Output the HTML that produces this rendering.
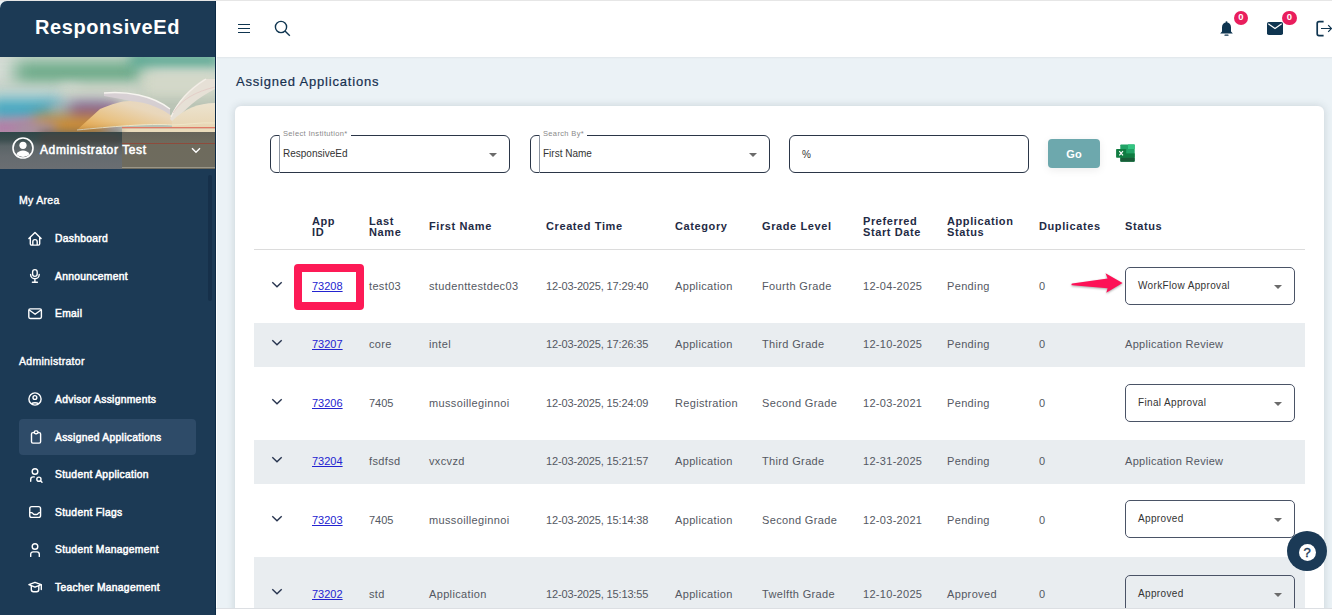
<!DOCTYPE html>
<html><head><meta charset="utf-8"><style>
*{box-sizing:border-box;margin:0;padding:0}
html,body{width:1332px;height:615px;overflow:hidden;background:#ebf2f6;font-family:"Liberation Sans",sans-serif;position:relative}
div,span,svg{position:absolute}
.t{white-space:nowrap}
#top{left:0;top:0;width:1332px;height:1px;background:#e6e6e6}
#side{left:0;top:1px;width:216px;height:614px;background:#1c3a55;border-top-left-radius:7px;overflow:hidden}
#sedge{left:215px;top:1px;width:1px;height:614px;background:#0c2a45}
#swhite{left:216px;top:57px;width:1px;height:558px;background:#fff}
#logo{left:0;top:0;width:215px;height:56px;color:#fff;font-weight:bold;font-size:20px;letter-spacing:0.6px;text-align:center;line-height:52px}
#img{left:0;top:56px;width:215px;height:112px;overflow:hidden;background:#b9c3b5}
#hdr{left:216px;top:1px;width:1116px;height:56px;background:#fff}
.mi{left:0;width:215px;height:36px;color:#fff;font-weight:normal;font-size:10.3px;letter-spacing:0.3px;-webkit-text-stroke:0.5px #fff}
.mi span{left:55px;top:0;line-height:36px}
.mi svg{left:27px;top:11px}
.sec{left:19px;color:#fff;font-weight:normal;font-size:10.5px;letter-spacing:0.3px;-webkit-text-stroke:0.4px #fff}
#card{left:235px;top:106px;width:1089px;height:520px;background:#fff;border-radius:6px;box-shadow:0 0 9px rgba(40,60,80,0.18)}
.fld{top:135px;height:38px;border:1px solid #2b3648;border-radius:6px;background:#fff}
.lbl{font-size:7.5px;letter-spacing:0.35px;color:#8a8a8a;background:#fff;padding:0 3px 0 3px;top:-7px;line-height:10px}
.val{left:12px;top:0;line-height:36px;font-size:10px;color:#333}
.tri{width:0;height:0;border-left:4px solid transparent;border-right:4px solid transparent;border-top:4px solid #6b6b6b}
.th{font-weight:bold;font-size:11px;color:#1f2b45;line-height:11px;letter-spacing:0.6px}
.row{left:254px;width:1051px}
.g{background:#e9edf0}
.td{font-size:11px;color:#545862;white-space:nowrap;line-height:12px}
.lnk{color:#2323d0;text-decoration:underline}
.sel{left:1125px;width:170px;height:38px;border:1px solid #4a5366;border-radius:5px;background:transparent}
.sel span{left:12px;top:0;line-height:36px;font-size:10px;color:#333;letter-spacing:0.35px}
.sel .tri{left:148px;top:17px}
</style></head><body>
<div id="top"></div>
<div id="side">
<div id="logo" class="t">ResponsiveEd</div>
<div id="img"><div style="left:-20px;top:-10px;width:260px;height:40px;background:#d6ddd6;filter:blur(8px)"></div><div style="left:15px;top:6px;width:130px;height:18px;background:#4d9c72;filter:blur(9px)"></div><div style="left:130px;top:-4px;width:90px;height:16px;background:#5aa892;filter:blur(6px)"></div><div style="left:140px;top:14px;width:80px;height:26px;background:#d3d8c8;filter:blur(7px)"></div><div style="left:-10px;top:30px;width:90px;height:20px;background:#c9d9d3;filter:blur(6px)"></div><div style="left:60px;top:28px;width:80px;height:22px;background:#cfd6c9;filter:blur(6px)"></div><div style="left:-10px;top:42px;width:70px;height:22px;background:#45a9c4;filter:blur(7px)"></div><div style="left:50px;top:45px;width:60px;height:20px;background:#98b4be;filter:blur(7px)"></div><div style="left:70px;top:46px;width:50px;height:22px;background:#8c5c8c;filter:blur(7px)"></div><div style="left:-10px;top:62px;width:50px;height:18px;background:#b27ba6;filter:blur(6px)"></div><div style="left:35px;top:58px;width:70px;height:22px;background:#c98a33;filter:blur(7px)"></div><div style="left:15px;top:65px;width:40px;height:15px;background:#a58fa0;filter:blur(6px)"></div><svg style="left:0;top:0" width="215" height="112" viewBox="0 0 215 112">
<defs><linearGradient id="pg" x1="0" y1="1" x2="1" y2="0"><stop offset="0" stop-color="#e4a040"/><stop offset="0.35" stop-color="#e8c284"/><stop offset="0.7" stop-color="#e9d7bb"/><stop offset="1" stop-color="#e5d9c8"/></linearGradient>
<linearGradient id="pg2" x1="0" y1="0" x2="0" y2="1"><stop offset="0" stop-color="#ece3cf"/><stop offset="1" stop-color="#e8d6b4"/></linearGradient></defs>
<path d="M104 36 C126 34 152 38 170 52 L170 58 C150 47 126 43 104 39 Z" fill="#d9d0d6" opacity="0.85"/>
<path d="M104 36 C126 34 152 38 170 52" stroke="#f7f5f0" stroke-width="1.4" fill="none"/>
<path d="M77 73 L100 52 C112 47 121 44 130 44 C148 45 162 52 172 59 L172 68 C150 67 115 69 77 73 Z" fill="url(#pg)"/>
<path d="M170 62 C176 46 188 32 204 22 L215 22 L215 32 C199 40 184 52 174 66 Z" fill="#e6e0d6"/>
<path d="M171 60 C178 44 190 32 206 22" stroke="#f3efe8" stroke-width="1.3" fill="none"/>
<path d="M173 56 C182 42 195 35 215 30" stroke="#e2c9c4" stroke-width="0.8" fill="none"/>
<path d="M172 64 C184 52 198 46 215 46 L215 70 L172 70 Z" fill="url(#pg2)"/>
<path d="M77 73 C110 70 150 66 172 68 C185 68 200 65 215 66" stroke="#efe6c8" stroke-width="1" fill="none"/>
<rect x="122" y="70" width="93" height="1.6" fill="#e07a66"/>
<rect x="122" y="71.5" width="93" height="3.5" fill="#eadcbc"/>
</svg><div style="left:0;top:75px;width:122px;height:37px;background:linear-gradient(180deg,#2f4748 0%,#3a4d4e 20%,#5a6467 38%,#656b6f 65%,#6a6e72 100%)"></div><div style="left:40px;top:75px;width:82px;height:14px;background:#4a4440;filter:blur(4px);opacity:0.7"></div><div style="left:122px;top:75px;width:93px;height:37px;background:linear-gradient(180deg,#66645a 0%,#6e6b5d 30%,#6e6b5e 100%)"></div><div style="left:122px;top:85.5px;width:93px;height:1.2px;background:#8e4b3c"></div><div style="left:122px;top:110px;width:93px;height:1px;background:#9a9688"></div></div>
</div>
<svg style="left:12px;top:137px" width="22" height="22" viewBox="0 0 22 22"><circle cx="11" cy="11" r="10" fill="none" stroke="#fff" stroke-width="1.6"/><circle cx="11" cy="8.3" r="3.6" fill="#fff"/><path d="M4.4 17.2C5.8 14.6 8.2 13.4 11 13.4S16.2 14.6 17.6 17.2A9.3 9.3 0 0 1 4.4 17.2Z" fill="#fff"/></svg>
<div class="t" style="left:40px;top:143px;color:#fff;font-size:12px;line-height:14px;letter-spacing:0.6px;-webkit-text-stroke:0.55px #fff">Administrator Test</div>
<svg style="left:191px;top:147px" width="10" height="7" viewBox="0 0 10 7"><path d="M1 1.2L5 5.2L9 1.2" stroke="#fff" stroke-width="1.4" fill="none"/></svg>
<div id="sedge"></div><div id="swhite"></div>
<div class="sec t" style="top:194px">My Area</div>
<div class="sec t" style="top:354.5px">Administrator</div>
<div style="left:19px;top:419px;width:177px;height:36px;background:#2e4b68;border-radius:4px"></div>
<div class="mi" style="top:221px"><span class="t">Dashboard</span></div>
<div class="mi" style="top:259px"><span class="t">Announcement</span></div>
<div class="mi" style="top:296px"><span class="t">Email</span></div>
<div class="mi" style="top:382px"><span class="t">Advisor Assignments</span></div>
<div class="mi" style="top:420px"><span class="t">Assigned Applications</span></div>
<div class="mi" style="top:457px"><span class="t">Student Application</span></div>
<div class="mi" style="top:495px"><span class="t">Student Flags</span></div>
<div class="mi" style="top:532px"><span class="t">Student Management</span></div>
<div class="mi" style="top:570px"><span class="t">Teacher Management</span></div>
<svg style="left:0;top:0" width="216" height="615" viewBox="0 0 216 615" fill="none" stroke="#fff" stroke-width="1.4" stroke-linecap="round" stroke-linejoin="round">
<path d="M28.9 238.6L35 232.6L41.1 238.6M30.3 237.3V243.8a1.3 1.3 0 0 0 1.3 1.3H38.4a1.3 1.3 0 0 0 1.3-1.3V237.3M32.8 245V241.8a2.2 2.2 0 0 1 4.4 0V245"/>
<rect x="32.6" y="269.6" width="4.6" height="6.8" rx="2.3"/>
<path d="M30.6 274.4a4.3 4.3 0 0 0 8.6 0M34.9 278.8V281.5M32.4 282.2H37.4" />
<rect x="28.8" y="308.9" width="12.6" height="9.6" rx="1.4"/>
<path d="M29.6 310.2L35.1 314.2L40.6 310.2"/>
<circle cx="35" cy="399" r="6.1"/>
<circle cx="34.9" cy="397.5" r="1.9"/>
<path d="M31.6 403.6a4 1.9 0 0 1 6.8 0"/>
<rect x="31.5" y="432.6" width="9.1" height="10.5" rx="1.4"/>
<rect x="34.2" y="430.9" width="3.8" height="2.8" rx="1.4" fill="#2e4b68"/>
<circle cx="35" cy="471.5" r="2.8"/>
<path d="M30.7 481.2V479.4a2.5 2.5 0 0 1 2.5-2.5H34.3"/>
<circle cx="38.9" cy="479.2" r="2.1"/>
<path d="M40.5 480.8L42 482.3"/>
<rect x="29.75" y="506.6" width="10.8" height="10.8" rx="2"/>
<path d="M29.9 512.6H31.4c.8 0 1.2.5 1.6 1 .4.6 1 .9 1.7.9h1.6c.7 0 1.3-.3 1.7-.9.4-.5.8-1 1.6-1H40.4"/>
<circle cx="35" cy="546.5" r="2.8"/>
<path d="M30.7 556.4V554.3a2.4 2.4 0 0 1 2.4-2.4H36.9a2.4 2.4 0 0 1 2.4 2.4V556.4"/>
<path d="M28.9 584.7L35 582.3L41.2 584.7L35 587.2Z"/>
<path d="M31.3 586V589.5a2.2 2.2 0 0 0 2.2 2.2H36.6a2.2 2.2 0 0 0 2.2-2.2V586M41.3 585V589.6"/>
</svg>
<div style="left:208px;top:175px;width:4px;height:126px;background:#16304a;border-radius:2px"></div>
<div id="hdr"></div><div style="left:217px;top:57px;width:1115px;height:2px;background:linear-gradient(180deg,#e0e6ea,#ebf2f6)"></div>
<svg style="left:237px;top:22px" width="14" height="13" viewBox="0 0 14 13"><path d="M1 2.5H13M1 6.5H13M1 10.5H13" stroke="#0f3550" stroke-width="1.2"/></svg>
<svg style="left:273px;top:19px" width="19" height="19" viewBox="0 0 19 19" fill="none" stroke="#0f3550" stroke-width="1.4"><circle cx="8" cy="8" r="5.6"/><path d="M12 12L16.8 16.8"/></svg>
<svg style="left:1219px;top:20px" width="15" height="17" viewBox="0 0 15 17"><circle cx="7.5" cy="2.3" r="1" fill="#0f3550"/><path d="M7.5 2.4c2.6 0 4.5 2 4.5 4.8v4.4l1.8 1.9H1.2l1.8-1.9V7.2c0-2.8 1.9-4.8 4.5-4.8z" fill="#0f3550"/><path d="M6 15.2h3" stroke="#0f3550" stroke-width="1.2" stroke-linecap="round"/></svg>
<div style="left:1234px;top:11px;width:14px;height:14px;border-radius:7px;background:#e91e5d;color:#fff;font-size:9.5px;font-weight:bold;text-align:center;line-height:12px">0</div>
<svg style="left:1267px;top:22px" width="16" height="13" viewBox="0 0 16 13"><rect x="0" y="0" width="16" height="13" rx="1.8" fill="#0f3550"/><path d="M1.3 1.8L8 6.5L14.7 1.8" stroke="#fff" stroke-width="1.2" fill="none"/></svg>
<div style="left:1282px;top:11px;width:15px;height:14px;border-radius:7px;background:#e91e5d;color:#fff;font-size:9.5px;font-weight:bold;text-align:center;line-height:12px">0</div>
<svg style="left:1315px;top:20px" width="17" height="17" viewBox="0 0 17 17" fill="none" stroke="#0f3550"><path d="M8.6 1.6H4a1.8 1.8 0 0 0-1.8 1.8V13.8a1.8 1.8 0 0 0 1.8 1.8H8.6" stroke-width="1.7"/><path d="M6 8.5H16.5M13.2 5.2L16.5 8.5L13.2 11.8" stroke-width="1.2"/></svg>
<div class="t" style="left:236px;top:74px;font-size:13px;letter-spacing:0.8px;color:#16304f;-webkit-text-stroke:0.2px #16304f">Assigned Applications</div>
<div id="card"></div>
<div class="fld" style="left:270px;width:240px"><div style="left:8px;top:-1px;width:1px;height:38px;background:#8f97a3"></div><div class="lbl t" style="left:9px">Select Institution*</div><div class="val t" style="">ResponsiveEd</div><div class="tri" style="left:218px;top:17px"></div></div>
<div class="fld" style="left:530px;width:240px"><div style="left:8px;top:-1px;width:1px;height:38px;background:#8f97a3"></div><div class="lbl t" style="left:9px">Search By*</div><div class="val t" style="">First Name</div><div class="tri" style="left:218px;top:17px"></div></div>
<div class="fld" style="left:789px;width:240px"><div class="val t" style="font-size:10px;top:1px">%</div></div>
<div style="left:1048px;top:139px;width:52px;height:29px;background:#6da8ad;border-radius:4px;color:#fff;font-weight:bold;font-size:11px;text-align:center;line-height:31px;box-shadow:0 2px 8px rgba(0,0,0,0.08)">Go</div>
<svg style="left:1115px;top:144px" width="21" height="19" viewBox="0 0 21 19"><rect x="5.3" y="0.4" width="14.4" height="17.3" rx="0.8" fill="#21a366"/><rect x="13" y="0.4" width="6.7" height="4.6" fill="#33c481"/><rect x="5.3" y="9.4" width="14.4" height="4.2" fill="#107c41"/><rect x="5.3" y="13.6" width="14.4" height="4.1" rx="0.8" fill="#185c37"/><rect x="1.1" y="4.9" width="10.1" height="8.8" rx="0.7" fill="#107c41"/><path d="M4.3 7.2L8 11.4M8 7.2L4.3 11.4" stroke="#fff" stroke-width="1.2"/></svg>
<div class="th t" style="left:312px;top:216px">App<br>ID</div>
<div class="th t" style="left:369px;top:216px">Last<br>Name</div>
<div class="th t" style="left:429px;top:221px">First Name</div>
<div class="th t" style="left:546px;top:221px">Created Time</div>
<div class="th t" style="left:675px;top:221px">Category</div>
<div class="th t" style="left:762px;top:221px">Grade Level</div>
<div class="th t" style="left:863px;top:216px">Preferred<br>Start Date</div>
<div class="th t" style="left:947px;top:216px">Application<br>Status</div>
<div class="th t" style="left:1039px;top:221px">Duplicates</div>
<div class="th t" style="left:1125px;top:221px">Status</div>
<div style="left:254px;top:249px;width:1051px;height:1px;background:#dcdcdc"></div>
<svg style="left:271px;top:280.5px" width="12" height="7" viewBox="0 0 12 7"><path d="M1.3 1.2L6 5.8L10.7 1.2" stroke="#27344f" stroke-width="1.4" fill="none"/></svg>
<div class="td t" style="left:312px;top:279.5px;letter-spacing:0"><span style="position:static" class="lnk">73208</span></div>
<div class="td t" style="left:369px;top:279.5px;letter-spacing:0.35px">test03</div>
<div class="td t" style="left:429px;top:279.5px;letter-spacing:0.35px">studenttestdec03</div>
<div class="td t" style="left:546px;top:279.5px;letter-spacing:-0.15px">12-03-2025, 17:29:40</div>
<div class="td t" style="left:675px;top:279.5px;letter-spacing:0.35px">Application</div>
<div class="td t" style="left:762px;top:279.5px;letter-spacing:0.35px">Fourth Grade</div>
<div class="td t" style="left:863px;top:279.5px;letter-spacing:0.3px">12-04-2025</div>
<div class="td t" style="left:947px;top:279.5px;letter-spacing:0.35px">Pending</div>
<div class="td t" style="left:1039px;top:279.5px;letter-spacing:0">0</div>
<div class="sel" style="top:267px"><span class="t">WorkFlow Approval</span><div class="tri"></div></div>
<div class="row g" style="top:323px;height:44px"></div>
<svg style="left:271px;top:339.0px" width="12" height="7" viewBox="0 0 12 7"><path d="M1.3 1.2L6 5.8L10.7 1.2" stroke="#27344f" stroke-width="1.4" fill="none"/></svg>
<div class="td t" style="left:312px;top:338.0px;letter-spacing:0"><span style="position:static" class="lnk">73207</span></div>
<div class="td t" style="left:369px;top:338.0px;letter-spacing:0.35px">core</div>
<div class="td t" style="left:429px;top:338.0px;letter-spacing:0.35px">intel</div>
<div class="td t" style="left:546px;top:338.0px;letter-spacing:-0.15px">12-03-2025, 17:26:35</div>
<div class="td t" style="left:675px;top:338.0px;letter-spacing:0.35px">Application</div>
<div class="td t" style="left:762px;top:338.0px;letter-spacing:0.35px">Third Grade</div>
<div class="td t" style="left:863px;top:338.0px;letter-spacing:0.3px">12-10-2025</div>
<div class="td t" style="left:947px;top:338.0px;letter-spacing:0.35px">Pending</div>
<div class="td t" style="left:1039px;top:338.0px;letter-spacing:0">0</div>
<div class="td t" style="left:1125px;top:338.0px;letter-spacing:0.3px">Application Review</div>
<svg style="left:271px;top:397.5px" width="12" height="7" viewBox="0 0 12 7"><path d="M1.3 1.2L6 5.8L10.7 1.2" stroke="#27344f" stroke-width="1.4" fill="none"/></svg>
<div class="td t" style="left:312px;top:396.5px;letter-spacing:0"><span style="position:static" class="lnk">73206</span></div>
<div class="td t" style="left:369px;top:396.5px;letter-spacing:0">7405</div>
<div class="td t" style="left:429px;top:396.5px;letter-spacing:0.35px">mussoilleginnoi</div>
<div class="td t" style="left:546px;top:396.5px;letter-spacing:-0.15px">12-03-2025, 15:24:09</div>
<div class="td t" style="left:675px;top:396.5px;letter-spacing:0.35px">Registration</div>
<div class="td t" style="left:762px;top:396.5px;letter-spacing:0.35px">Second Grade</div>
<div class="td t" style="left:863px;top:396.5px;letter-spacing:0.3px">12-03-2021</div>
<div class="td t" style="left:947px;top:396.5px;letter-spacing:0.35px">Pending</div>
<div class="td t" style="left:1039px;top:396.5px;letter-spacing:0">0</div>
<div class="sel" style="top:384px"><span class="t">Final Approval</span><div class="tri"></div></div>
<div class="row g" style="top:440px;height:44px"></div>
<svg style="left:271px;top:456.0px" width="12" height="7" viewBox="0 0 12 7"><path d="M1.3 1.2L6 5.8L10.7 1.2" stroke="#27344f" stroke-width="1.4" fill="none"/></svg>
<div class="td t" style="left:312px;top:455.0px;letter-spacing:0"><span style="position:static" class="lnk">73204</span></div>
<div class="td t" style="left:369px;top:455.0px;letter-spacing:0.35px">fsdfsd</div>
<div class="td t" style="left:429px;top:455.0px;letter-spacing:0.35px">vxcvzd</div>
<div class="td t" style="left:546px;top:455.0px;letter-spacing:-0.15px">12-03-2025, 15:21:57</div>
<div class="td t" style="left:675px;top:455.0px;letter-spacing:0.35px">Application</div>
<div class="td t" style="left:762px;top:455.0px;letter-spacing:0.35px">Third Grade</div>
<div class="td t" style="left:863px;top:455.0px;letter-spacing:0.3px">12-31-2025</div>
<div class="td t" style="left:947px;top:455.0px;letter-spacing:0.35px">Pending</div>
<div class="td t" style="left:1039px;top:455.0px;letter-spacing:0">0</div>
<div class="td t" style="left:1125px;top:455.0px;letter-spacing:0.3px">Application Review</div>
<svg style="left:271px;top:514.5px" width="12" height="7" viewBox="0 0 12 7"><path d="M1.3 1.2L6 5.8L10.7 1.2" stroke="#27344f" stroke-width="1.4" fill="none"/></svg>
<div class="td t" style="left:312px;top:513.5px;letter-spacing:0"><span style="position:static" class="lnk">73203</span></div>
<div class="td t" style="left:369px;top:513.5px;letter-spacing:0">7405</div>
<div class="td t" style="left:429px;top:513.5px;letter-spacing:0.35px">mussoilleginnoi</div>
<div class="td t" style="left:546px;top:513.5px;letter-spacing:-0.15px">12-03-2025, 15:14:38</div>
<div class="td t" style="left:675px;top:513.5px;letter-spacing:0.35px">Application</div>
<div class="td t" style="left:762px;top:513.5px;letter-spacing:0.35px">Second Grade</div>
<div class="td t" style="left:863px;top:513.5px;letter-spacing:0.3px">12-03-2021</div>
<div class="td t" style="left:947px;top:513.5px;letter-spacing:0.35px">Pending</div>
<div class="td t" style="left:1039px;top:513.5px;letter-spacing:0">0</div>
<div class="sel" style="top:500px"><span class="t">Approved</span><div class="tri"></div></div>
<div class="row g" style="top:557px;height:74px"></div>
<svg style="left:271px;top:588.0px" width="12" height="7" viewBox="0 0 12 7"><path d="M1.3 1.2L6 5.8L10.7 1.2" stroke="#27344f" stroke-width="1.4" fill="none"/></svg>
<div class="td t" style="left:312px;top:588.0px;letter-spacing:0"><span style="position:static" class="lnk">73202</span></div>
<div class="td t" style="left:369px;top:588.0px;letter-spacing:0.35px">std</div>
<div class="td t" style="left:429px;top:588.0px;letter-spacing:0.35px">Application</div>
<div class="td t" style="left:546px;top:588.0px;letter-spacing:-0.15px">12-03-2025, 15:13:55</div>
<div class="td t" style="left:675px;top:588.0px;letter-spacing:0.35px">Application</div>
<div class="td t" style="left:762px;top:588.0px;letter-spacing:0.35px">Twelfth Grade</div>
<div class="td t" style="left:863px;top:588.0px;letter-spacing:0.3px">12-10-2025</div>
<div class="td t" style="left:947px;top:588.0px;letter-spacing:0.35px">Approved</div>
<div class="td t" style="left:1039px;top:588.0px;letter-spacing:0">0</div>
<div class="sel" style="top:575px"><span class="t">Approved</span><div class="tri"></div></div>
<div style="left:294px;top:264px;width:70px;height:46px;border:8px solid #fd1a56;border-radius:4px"></div>
<svg style="left:1066px;top:266px;filter:drop-shadow(0.8px 1.4px 1px rgba(0,0,0,0.35))" width="64" height="32" viewBox="0 0 64 32"><path d="M6.3 17.6L41.6 12.6L39.5 7.3L56.6 17L40.3 26.8L41.6 22.3L6.3 19.3a0.85 0.85 0 0 1 0-1.7Z" fill="#fd1156"/></svg>
<div style="left:216px;top:608px;width:1116px;height:7px;background:#fff;border-top:1px solid #dcdfe3"></div>
<div style="left:1287px;top:531px;width:40px;height:40px;border-radius:20px;background:#1b3a56"></div>
<div style="left:1298.5px;top:543.5px;width:17px;height:17px;border-radius:9px;background:#fff;color:#1b3a56;font-size:13px;text-align:center;line-height:17px;-webkit-text-stroke:0.4px #1b3a56">?</div>
</body></html>
